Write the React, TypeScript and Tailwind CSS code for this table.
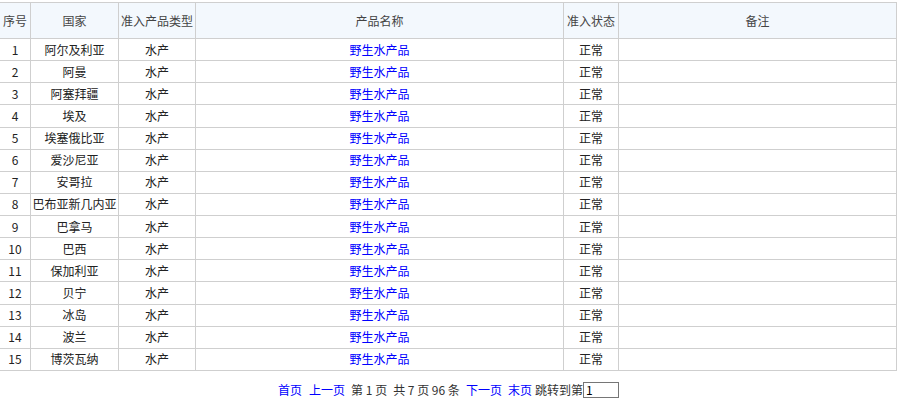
const ROWS = [
  '阿尔及利亚',
  '阿曼',
  '阿塞拜疆',
  '埃及',
  '埃塞俄比亚',
  '爱沙尼亚',
  '安哥拉',
  '巴布亚新几内亚',
  '巴拿马',
  '巴西',
  '保加利亚',
  '贝宁',
  '冰岛',
  '波兰',
  '博茨瓦纳',
];

const FONT = "font-['Microsoft_YaHei','Noto_Sans_CJK_SC',sans-serif]";

export default function App() {
  return (
    <div className={`w-[897px] h-[404px] overflow-hidden bg-white text-[12px] ${FONT}`}>
      <table className="mt-[2px] -ml-px w-[898px] table-fixed border-collapse border border-[#cfcfcf]">
        <colgroup>
          <col className="w-[31px]" />
          <col className="w-[88px]" />
          <col className="w-[77px]" />
          <col className="w-[368px]" />
          <col className="w-[55px]" />
          <col />
        </colgroup>
        <thead>
          <tr className="h-[36px] bg-[#f3f8fd] text-[#444]">
            <th className="border border-[#cfcfcf] p-0 font-normal">序号</th>
            <th className="border border-[#cfcfcf] p-0 font-normal">国家</th>
            <th className="border border-[#cfcfcf] p-0 font-normal">准入产品类型</th>
            <th className="border border-[#cfcfcf] p-0 font-normal">产品名称</th>
            <th className="border border-[#cfcfcf] p-0 font-normal">准入状态</th>
            <th className="border border-[#cfcfcf] p-0 font-normal">备注</th>
          </tr>
        </thead>
        <tbody>
          {ROWS.map((country, i) => (
            <tr key={country} className="h-[22.13px] text-[#222]">
              <td className="border border-[#cfcfcf] p-0 text-center">{i + 1}</td>
              <td className="border border-[#cfcfcf] p-0 text-center">{country}</td>
              <td className="border border-[#cfcfcf] p-0 text-center">水产</td>
              <td className="border border-[#cfcfcf] p-0 text-center text-[#0000ff]">野生水产品</td>
              <td className="border border-[#cfcfcf] p-0 text-center">正常</td>
              <td className="border border-[#cfcfcf] p-0"></td>
            </tr>
          ))}
        </tbody>
      </table>

      {/* pager */}
      <div className="mt-[10px] flex items-center justify-center gap-[6px] text-[#333]">
        <span className="mr-px text-[#0000ff]">首页</span>
        <span className="text-[#0000ff]">上一页</span>
        <span>第 1 页</span>
        <span>共 7 页 96 条</span>
        <span className="text-[#0000ff]">下一页</span>
        <span className="-mr-[3px] text-[#0000ff]">末页</span>
        <span className="flex items-center">
          跳转到第
          <span className="flex h-[16px] w-[36px] items-center border border-[#767676] pl-[2px] leading-none text-black">1</span>
        </span>
      </div>
    </div>
  );
}
